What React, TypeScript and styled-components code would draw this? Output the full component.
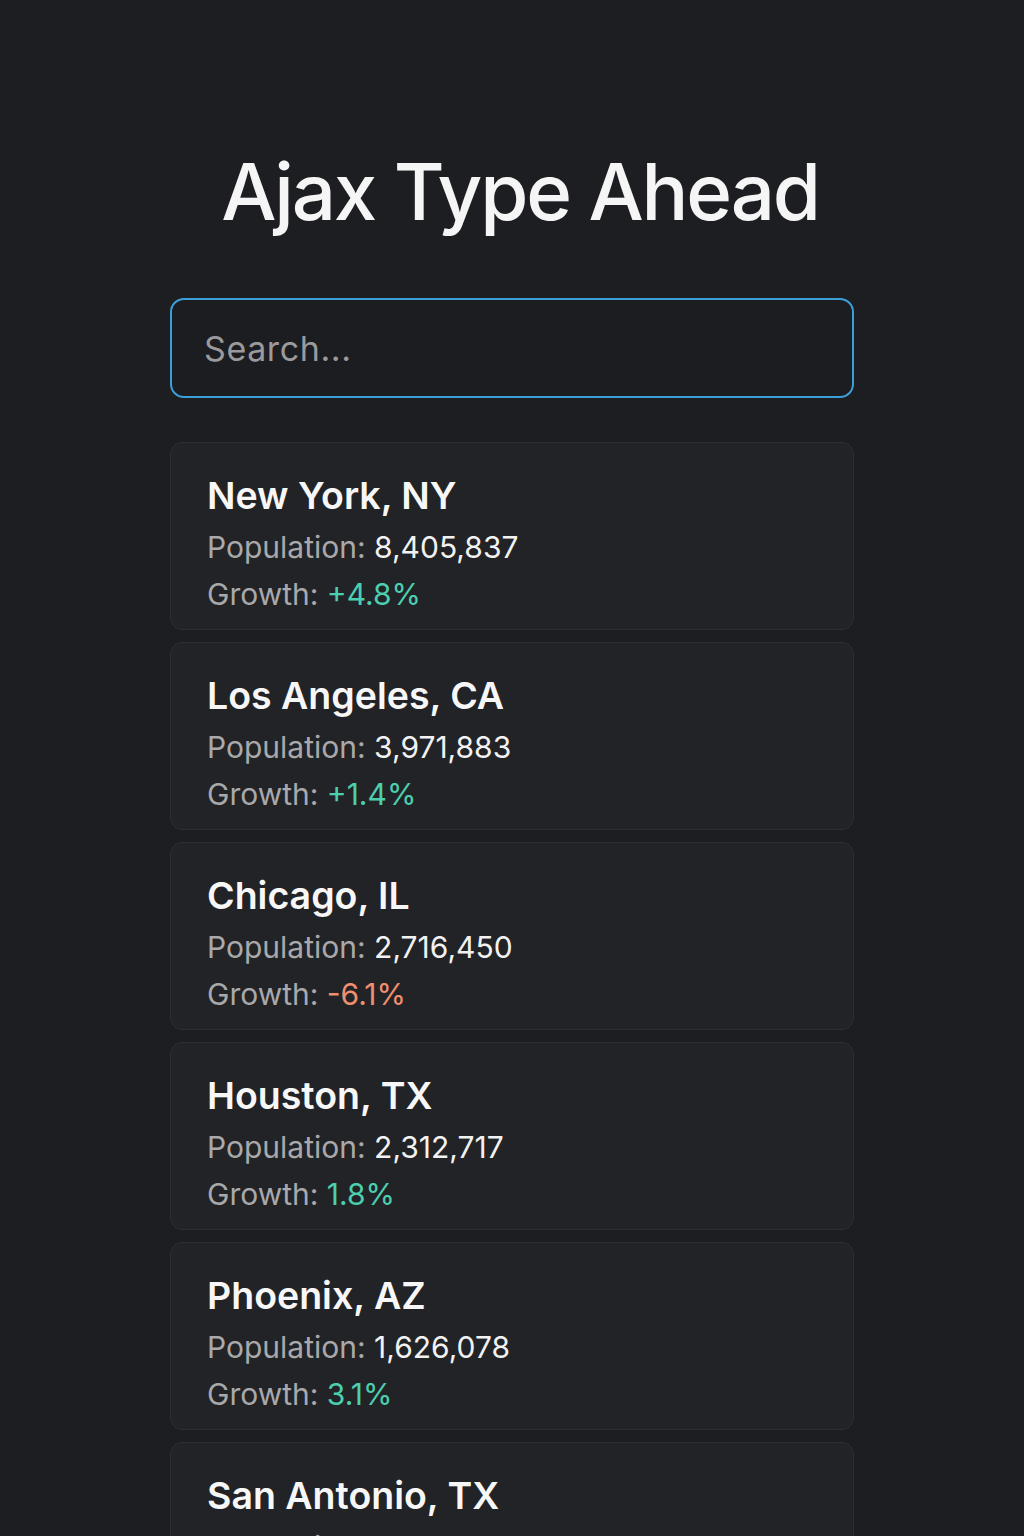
import { createGlobalStyle } from "styled-components";
import styled from "styled-components";

const Global = createGlobalStyle`
  html, body {
    margin: 0;
    padding: 0;
    background: #1d1e22;
  }
  body {
    font-family: Inter, "Noto Sans", "Liberation Sans", sans-serif;
    color: #f2f2f2;
  }
`;

const Page = styled.div`
  height: 1536px;
  overflow: hidden;
  display: flex;
  flex-direction: column;
  align-items: center;
  padding-top: 142px;
  box-sizing: border-box;
`;

const Title = styled.h1`
  margin: 0;
  padding-left: 16px;
  font-size: 78px;
  line-height: 100px;
  font-weight: 500;
  color: #f5f5f5;
  letter-spacing: -2.2px;
`;

const Wrap = styled.div`
  width: 684px;
  display: flex;
  flex-direction: column;
  gap: 12px;
`;

const Search = styled.input`
  box-sizing: border-box;
  width: 100%;
  height: 100px;
  margin-top: 56px;
  margin-bottom: 32px;
  padding: 0 32px;
  border: 2px solid #3d9fd8;
  border-radius: 14px;
  background: #1c1d21;
  color: #f2f2f2;
  font-family: Inter, "Noto Sans", sans-serif;
  font-size: 34px;
  letter-spacing: 0.6px;
  outline: none;
  &::placeholder {
    color: #9a9a9c;
  }
`;

const Card = styled.div`
  box-sizing: border-box;
  flex-shrink: 0;
  height: 188px;
  padding: 25px 36px 11px;
  border: 1px solid #2d2e33;
  border-radius: 12px;
  background: #222327;
`;

const City = styled.div`
  font-size: 37.5px;
  line-height: 56px;
  font-weight: 600;
  color: #f7f7f7;
`;

const Row = styled.div`
  font-size: 30px;
  line-height: 47px;
  color: #a9a9ab;
`;

const Value = styled.span<{ $tone?: "up" | "down" }>`
  color: ${(p) =>
    p.$tone === "up" ? "#4ccfae" : p.$tone === "down" ? "#f08f6e" : "#f2f2f2"};
`;

const cities = [
  { name: "New York, NY", pop: "8,405,837", growth: "+4.8%", tone: "up" },
  { name: "Los Angeles, CA", pop: "3,971,883", growth: "+1.4%", tone: "up" },
  { name: "Chicago, IL", pop: "2,716,450", growth: "-6.1%", tone: "down" },
  { name: "Houston, TX", pop: "2,312,717", growth: "1.8%", tone: "up" },
  { name: "Phoenix, AZ", pop: "1,626,078", growth: "3.1%", tone: "up" },
  { name: "San Antonio, TX", pop: "1,409,325", growth: "4.8%", tone: "up" },
] as const;

const App = () => {
  return (
    <>
      <Global />
      <Page>
        <Title>Ajax Type Ahead</Title>
        <Wrap>
          <Search placeholder="Search..." />
          {cities.map((c) => (
            <Card key={c.name}>
              <City>{c.name}</City>
              <Row>
                Population: <Value>{c.pop}</Value>
              </Row>
              <Row>
                Growth: <Value $tone={c.tone}>{c.growth}</Value>
              </Row>
            </Card>
          ))}
        </Wrap>
      </Page>
    </>
  );
};

export default App;
